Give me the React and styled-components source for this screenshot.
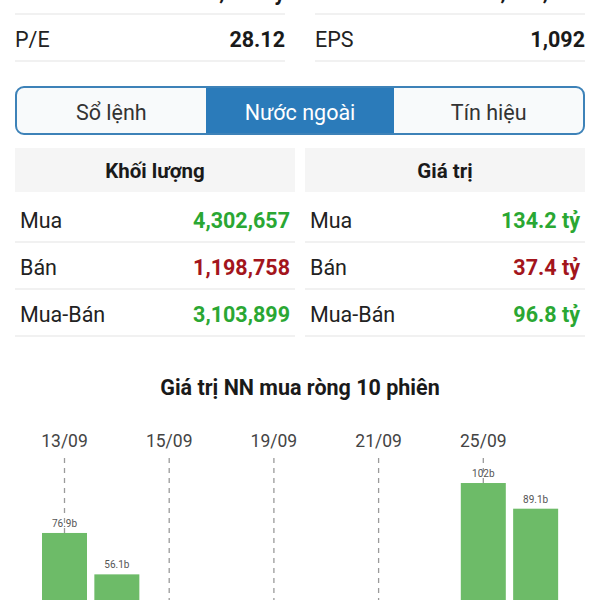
import React from "react";
import styled, { createGlobalStyle } from "styled-components";

const GlobalStyle = createGlobalStyle`
  html, body { margin: 0; padding: 0; background: #fff; overflow: hidden; }
  body { font-family: Roboto, "Noto Sans", "Liberation Sans", sans-serif; color: #222; }
  * { box-sizing: border-box; }
`;

const Page = styled.div`
  width: 600px;
  margin-top: -32px;
`;

const Section = styled.div`
  padding: 0 15px;
`;

const InfoGrid = styled.div`
  display: grid;
  grid-template-columns: 1fr 1fr;
  column-gap: 30px;
`;

const InfoRow = styled.div`
  display: flex;
  align-items: center;
  justify-content: space-between;
  height: 47px;
  padding-top: 4px;
  border-bottom: 2px solid #f1f1f1;
  font-size: 21.5px;
`;

const Label = styled.span`
  color: #222;
  padding-left: ${(p) => p.$pad || 0}px;
`;

const Value = styled.span`
  font-weight: 700;
  color: ${(p) => p.$color || "#1a1a1a"};
  padding-right: ${(p) => p.$pad || 0}px;
`;

const Tabs = styled.div`
  display: flex;
  margin-top: 24px;
  height: 49px;
  border: 2px solid #3d82b8;
  border-radius: 9px;
  overflow: hidden;
  background: #f8fafb;
`;

const Tab = styled.div`
  flex: 1;
  display: flex;
  align-items: center;
  justify-content: center;
  padding-top: 3px;
  font-size: 21.5px;
  color: ${(p) => (p.$active ? "#fff" : "#333")};
  background: ${(p) => (p.$active ? "#2b7bba" : "transparent")};
`;

const TableGrid = styled.div`
  display: grid;
  grid-template-columns: 1fr 1fr;
  column-gap: 10px;
  margin-top: 13px;
`;

const Column = styled.div`
  display: flex;
  flex-direction: column;
`;

const HeadCell = styled.div`
  height: 44px;
  display: flex;
  align-items: center;
  justify-content: center;
  padding-top: 2px;
  background: #f5f5f5;
  font-size: 20.5px;
  font-weight: 700;
  color: #1a1a1a;
  margin-bottom: 4px;
`;

const TableRow = styled(InfoRow)``;

const ChartTitle = styled.div`
  margin-top: 34px;
  height: 32px;
  line-height: 34px;
  text-align: center;
  font-size: 21.5px;
  font-weight: 700;
  color: #1a1a1a;
`;

const ChartBox = styled.div`
  width: 600px;
  height: 300px;
  svg { display: block; }
`;

const GREEN = "#2aa733";
const RED = "#a3151c";

const volRows = [
  { l: "Mua", v: "4,302,657", c: GREEN },
  { l: "Bán", v: "1,198,758", c: RED },
  { l: "Mua-Bán", v: "3,103,899", c: GREEN },
];
const valRows = [
  { l: "Mua", v: "134.2 tỷ", c: GREEN },
  { l: "Bán", v: "37.4 tỷ", c: RED },
  { l: "Mua-Bán", v: "96.8 tỷ", c: GREEN },
];

const bars = [
  { v: 76.9, d: "13/09" },
  { v: 56.1 },
  { v: 21.4, d: "15/09" },
  { v: 14.8 },
  { v: 30.5, d: "19/09" },
  { v: 12.7 },
  { v: 18.9, d: "21/09" },
  { v: 25.6 },
  { v: 102, d: "25/09", label: "102b" },
  { v: 89.1 },
];

const TOP = 403;
const BASE = 686 - TOP;
const SCALE = 1.99;
const slot = 52.35;
const firstCenter = 64.5;
const barW = 45;

function Chart() {
  return (
    <svg width="600" height="300" viewBox="0 0 600 300">
      {bars.map((b, i) =>
        b.d ? (
          <g key={"d" + i}>
            <text
              x={firstCenter + i * slot}
              y={44}
              textAnchor="middle"
              fontSize="17.5"
              fill="#444"
              fontFamily="Roboto, sans-serif"
            >
              {b.d}
            </text>
            <line
              x1={firstCenter + i * slot}
              x2={firstCenter + i * slot}
              y1={55}
              y2={300}
              stroke="#9a9a9a"
              strokeWidth="1.3"
              strokeDasharray="5 5"
            />
          </g>
        ) : null
      )}
      {bars.map((b, i) => {
        const h = b.v * SCALE;
        const cx = firstCenter + i * slot;
        return (
          <rect
            key={"b" + i}
            x={cx - barW / 2}
            y={BASE - h}
            width={barW}
            height={h}
            fill="#6dbb68"
          />
        );
      })}
      {bars.map((b, i) => {
        const h = b.v * SCALE;
        const cx = firstCenter + i * slot;
        return (
          <text
            key={"l" + i}
            x={cx}
            y={BASE - h - 6}
            textAnchor="middle"
            fontSize="10"
            fill="#555"
            fontFamily="Roboto, sans-serif"
          >
            {b.label || b.v.toFixed(1) + "b"}
          </text>
        );
      })}
    </svg>
  );
}

export default function App() {
  return (
    <Page>
      <GlobalStyle />
      <Section>
        <InfoGrid>
          <InfoRow>
            <Label>Vốn hóa</Label>
            <Value>63,376 tỷ</Value>
          </InfoRow>
          <InfoRow>
            <Label>KLCP</Label>
            <Value>2,125,100</Value>
          </InfoRow>
          <InfoRow>
            <Label>P/E</Label>
            <Value>28.12</Value>
          </InfoRow>
          <InfoRow>
            <Label>EPS</Label>
            <Value>1,092</Value>
          </InfoRow>
        </InfoGrid>
        <Tabs>
          <Tab>Sổ lệnh</Tab>
          <Tab $active>Nước ngoài</Tab>
          <Tab>Tín hiệu</Tab>
        </Tabs>
        <TableGrid>
          <Column>
            <HeadCell>Khối lượng</HeadCell>
            {volRows.map((r) => (
              <TableRow key={r.l}>
                <Label $pad={5}>{r.l}</Label>
                <Value $color={r.c} $pad={5}>{r.v}</Value>
              </TableRow>
            ))}
          </Column>
          <Column>
            <HeadCell>Giá trị</HeadCell>
            {valRows.map((r) => (
              <TableRow key={r.l}>
                <Label $pad={5}>{r.l}</Label>
                <Value $color={r.c} $pad={5}>{r.v}</Value>
              </TableRow>
            ))}
          </Column>
        </TableGrid>
      </Section>
      <ChartTitle>Giá trị NN mua ròng 10 phiên</ChartTitle>
      <ChartBox>
        <Chart />
      </ChartBox>
    </Page>
  );
}
